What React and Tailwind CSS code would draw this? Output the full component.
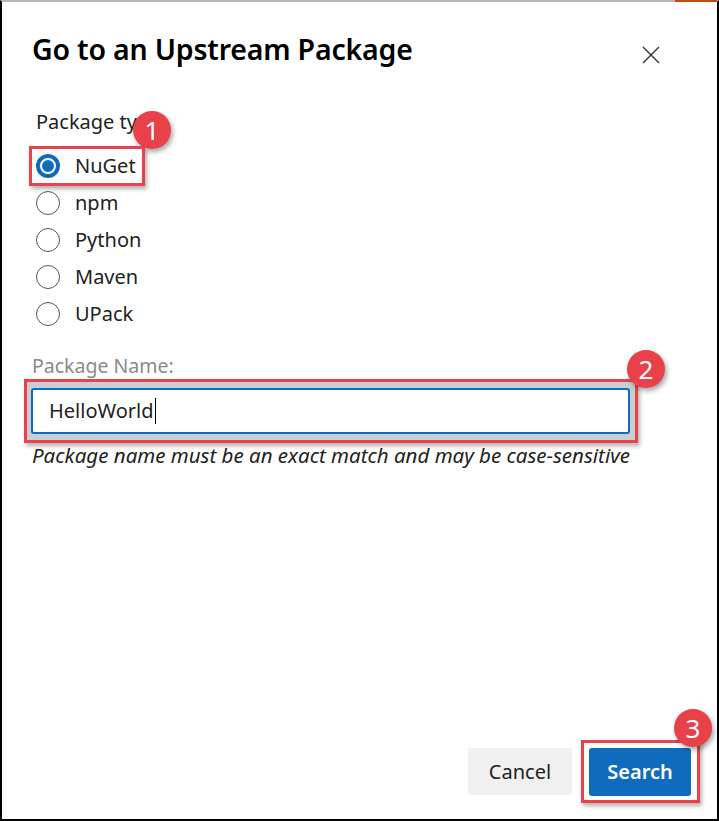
import React from "react";

const font = { fontFamily: '"Noto Sans", "Open Sans", Arial, sans-serif' };

function Badge({ n, className }) {
  return (
    <div
      className={
        "absolute w-[38px] h-[38px] rounded-full bg-[#e9414a] text-white flex items-center justify-center text-[26px] leading-none shadow-[2px_3px_5px_rgba(0,0,0,0.35)] " +
        className
      }
    >
      {n}
    </div>
  );
}

function Radio({ label, checked }) {
  return (
    <div className="flex items-center h-[37px]">
      <div
        className={
          "w-[24px] h-[24px] rounded-full flex items-center justify-center " +
          (checked ? "bg-[#0f6cbd]" : "border border-[#555]")
        }
      >
        {checked && <div className="w-[16px] h-[16px] rounded-full border-2 border-white bg-[#0f6cbd]" />}
      </div>
      <span className="ml-[15px] text-[20px] text-[#222]">{label}</span>
    </div>
  );
}

export default function App() {
  return (
    <div style={font} className="w-[719px] h-[821px] bg-white relative overflow-hidden">
      <div className="absolute inset-0 border-l-2 border-r-2 border-b-2 border-t-2 border-black border-t-[#b5b5b5] pointer-events-none z-10" />
      <div className="absolute top-0 right-[2px] w-[42px] h-[2px] bg-[#c04a10] z-10" />
      <div className="h-full flex flex-col pl-[32px] pr-[26px]">
        <div className="flex items-start justify-between mt-[30px]">
          <h1 className="text-[28.5px] leading-[38px] font-semibold text-black tracking-[-0.2px]">
            Go to an Upstream Package
          </h1>
          <svg width="18" height="18" viewBox="0 0 18 18" className="mt-[16px] mr-[33px]">
            <path d="M1 1 L17 17 M17 1 L1 17" stroke="#333" strokeWidth="1.4" />
          </svg>
        </div>
        <div className="mt-[40px] ml-[4px] relative">
          <div className="text-[20px] leading-[28px] text-[#222]">Package type</div>
          <Badge n="1" className="left-[97px] top-[3px]" />
        </div>
        <div className="mt-[11px] ml-[4px] flex flex-col">
          <div className="relative">
            <div className="absolute left-[-7px] top-[-1px] w-[116px] h-[40px] border-[3px] border-[#e8434b] shadow-[2px_3px_4px_rgba(0,0,0,0.3)]" />
            <Radio label="NuGet" checked />
          </div>
          <Radio label="npm" />
          <Radio label="Python" />
          <Radio label="Maven" />
          <Radio label="UPack" />
        </div>
        <div className="mt-[21px] text-[19.5px] leading-[26px] text-[#8a8a8a]">Package Name:</div>
        <div className="relative mt-[0px] ml-[-8px] w-[614px] h-[64px] border-[3px] border-[#e8434b] bg-[#c9ced3] shadow-[2px_3px_4px_rgba(0,0,0,0.3)] p-[6px_5px_5px_4px]">
          <div className="h-[46px] w-full bg-white border-2 border-[#0f6cbd] rounded-[3px] flex items-center pl-[16px]">
            <span className="text-[20px] text-[#222]">HelloWorld</span>
            <span className="w-[1px] h-[26px] bg-black ml-[1px]" />
          </div>
          <Badge n="2" className="left-[600px] top-[-32px]" />
        </div>
        <div className="mt-[0px] text-[20.5px] leading-[24px] italic text-[#222]">
          Package name must be an exact match and may be case-sensitive
        </div>
        <div className="mt-auto mb-[18px] flex justify-end items-center gap-[9px] mr-[1px]">
          <button className="w-[104px] h-[47px] bg-[#f0f0f0] rounded-[3px] text-[20px] text-[#222]">
            Cancel
          </button>
          <div className="relative border-[3px] border-[#e8434b] p-[5px_6px_4px_5px] mr-[-8px] shadow-[2px_3px_4px_rgba(0,0,0,0.3)]">
            <button className="w-[102px] h-[48px] bg-[#0f6cbd] rounded-[3px] text-[20px] font-semibold text-white">
              Search
            </button>
            <Badge n="3" className="right-[-15px] top-[-34px]" />
          </div>
        </div>
      </div>
    </div>
  );
}
